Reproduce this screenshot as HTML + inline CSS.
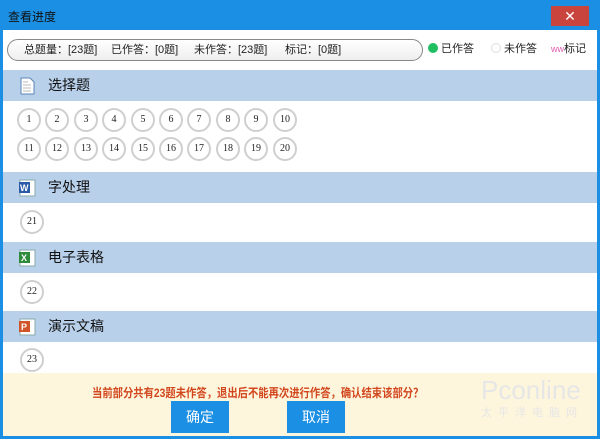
<!DOCTYPE html>
<html><head><meta charset="utf-8"><style>
*{margin:0;padding:0;box-sizing:border-box}
body{width:600px;height:439px;background:#1b8fe3;font-family:"Liberation Sans","Noto Sans CJK SC",sans-serif;position:relative;overflow:hidden}
.title{position:absolute;left:8px;top:8px;font-size:12px;color:#111}
.close{position:absolute;left:551px;top:6px;width:38px;height:20px;background:#c8443c;color:#fff;font-size:14px;text-align:center;line-height:20px}
.main{position:absolute;left:3px;top:30px;width:594px;height:406px;background:#fff}
.stats{position:absolute;left:4px;top:9px;width:416px;height:22px;border:1px solid #888;border-radius:11px;background:linear-gradient(#fff,#eee);font-size:11px;color:#222;line-height:20px}
.stats span{position:absolute}
.leg{position:absolute;top:11px;font-size:11px;line-height:16px;color:#222}
.hdr{position:absolute;left:0;width:594px;height:31px;background:#b9d0ea;font-size:14px;color:#111;line-height:31px}
.hdr b{font-weight:normal;position:absolute;left:45px}
.ic{position:absolute;left:16px;top:7px;width:17px;height:18px}
.c{position:absolute;width:24px;height:24px;border:2px solid #cfcfcf;border-radius:50%;font-family:"Liberation Serif",serif;font-size:10px;text-align:center;line-height:20px;color:#222;background:#fff}
.foot{position:absolute;left:0;top:343px;width:594px;height:63px;background:#fdf6dc}
.msg{position:absolute;left:89px;top:11px;font-size:12px;font-weight:bold;color:#d2461e;white-space:nowrap;transform:scaleX(0.86);transform-origin:left}
.btn{position:absolute;top:28px;width:58px;height:32px;background:#1b8fe3;color:#fff;font-size:14px;text-align:center;line-height:32px}
</style></head><body>
<div class="title">查看进度</div>
<div class="close">✕</div>
<div class="main">
<div class="stats"><span style="left:16px">总题量：[23题]</span><span style="left:103px">已作答：[0题]</span><span style="left:186px">未作答：[23题]</span><span style="left:277px">标记：[0题]</span></div>
<div class="leg" style="left:425px"><span style="display:inline-block;width:10px;height:10px;border-radius:50%;background:#1fbf62;vertical-align:-1px"></span> 已作答</div>
<div class="leg" style="left:488px"><span style="display:inline-block;width:10px;height:10px;border-radius:50%;border:1px solid #ddd;vertical-align:-1px"></span> 未作答</div>
<div class="leg" style="left:548px"><span style="color:#e05ab0;font-size:9px">ww</span>标记</div>

<div class="hdr" style="top:40px"><svg class="ic" viewBox="0 0 17 18"><path d="M2 1h9l4 4v12H2z" fill="#fff" stroke="#5b86b8"/><path d="M4 5h5M4 8h8M4 11h8M4 14h8" stroke="#bbb"/></svg><b>选择题</b></div>
<div class="hdr" style="top:142px"><svg class="ic" viewBox="0 0 17 18"><rect x="1" y="1" width="15" height="16" fill="#fff" stroke="#8aa"/><rect x="0" y="3" width="11" height="11" fill="#2a5aa8"/><text x="1" y="12" font-size="9" fill="#fff" font-weight="bold" font-family="Liberation Sans">W</text></svg><b>字处理</b></div>
<div class="hdr" style="top:212px"><svg class="ic" viewBox="0 0 17 18"><rect x="1" y="1" width="15" height="16" fill="#fff" stroke="#8aa"/><rect x="0" y="3" width="11" height="11" fill="#2f8b3c"/><text x="2" y="12" font-size="9" fill="#fff" font-weight="bold" font-family="Liberation Sans">X</text></svg><b>电子表格</b></div>
<div class="hdr" style="top:281px"><svg class="ic" viewBox="0 0 17 18"><rect x="1" y="1" width="15" height="16" fill="#fff" stroke="#8aa"/><rect x="0" y="3" width="11" height="11" fill="#d0552a"/><text x="2" y="12" font-size="9" fill="#fff" font-weight="bold" font-family="Liberation Sans">P</text></svg><b>演示文稿</b></div>

<div class="c" style="left:14px;top:78px">1</div><div class="c" style="left:42px;top:78px">2</div><div class="c" style="left:71px;top:78px">3</div><div class="c" style="left:99px;top:78px">4</div><div class="c" style="left:128px;top:78px">5</div><div class="c" style="left:156px;top:78px">6</div><div class="c" style="left:184px;top:78px">7</div><div class="c" style="left:213px;top:78px">8</div><div class="c" style="left:241px;top:78px">9</div><div class="c" style="left:270px;top:78px">10</div>
<div class="c" style="left:14px;top:107px">11</div><div class="c" style="left:42px;top:107px">12</div><div class="c" style="left:71px;top:107px">13</div><div class="c" style="left:99px;top:107px">14</div><div class="c" style="left:128px;top:107px">15</div><div class="c" style="left:156px;top:107px">16</div><div class="c" style="left:184px;top:107px">17</div><div class="c" style="left:213px;top:107px">18</div><div class="c" style="left:241px;top:107px">19</div><div class="c" style="left:270px;top:107px">20</div>
<div class="c" style="left:17px;top:180px">21</div>
<div class="c" style="left:17px;top:250px">22</div>
<div class="c" style="left:17px;top:318px">23</div>

<div class="foot">
<div style="position:absolute;left:478px;top:2px;font-size:26px;color:#e6e6e6">Pconline</div>
<div style="position:absolute;left:478px;top:31px;font-size:11px;color:#e6e6e6;letter-spacing:6px">太平洋电脑网</div>
<div class="msg">当前部分共有23题未作答，退出后不能再次进行作答，确认结束该部分？</div>
<div class="btn" style="left:168px">确定</div><div class="btn" style="left:284px">取消</div>
</div>
</div>
</body></html>
